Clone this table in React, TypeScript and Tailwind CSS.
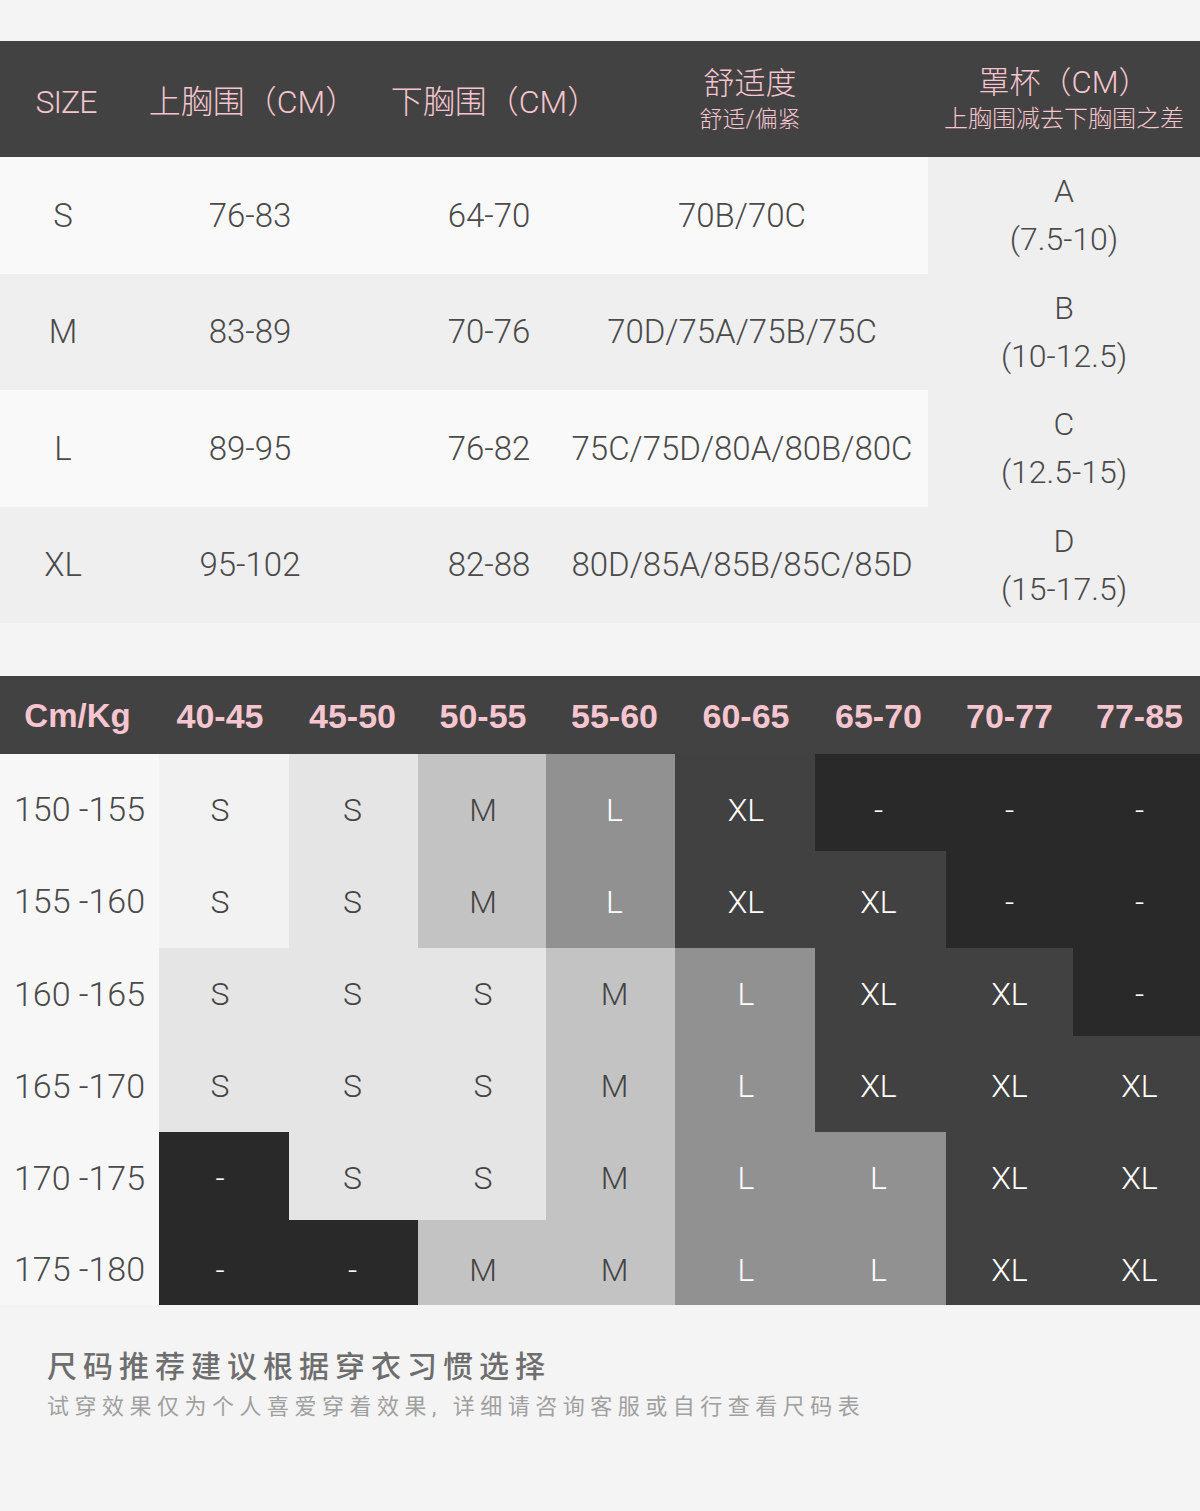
import React from "react";

const PINK = "text-[#f6c5cf]";

const sizeRows = [
  { s: "S", up: "76-83", low: "64-70", fit: "70B/70C", bg: "bg-[#f9f9f9]" },
  { s: "M", up: "83-89", low: "70-76", fit: "70D/75A/75B/75C", bg: "bg-[#efefef]" },
  { s: "L", up: "89-95", low: "76-82", fit: "75C/75D/80A/80B/80C", bg: "bg-[#f9f9f9]" },
  { s: "XL", up: "95-102", low: "82-88", fit: "80D/85A/85B/85C/85D", bg: "bg-[#efefef]" },
];

const cups = [
  ["A", "(7.5-10)"],
  ["B", "(10-12.5)"],
  ["C", "(12.5-15)"],
  ["D", "(15-17.5)"],
];

type Cell = { t: string; c: "a" | "b" | "c" | "d" | "e" | "f" };

const cellBg: Record<Cell["c"], string> = {
  a: "bg-[#f2f2f2] text-[#444444]",
  b: "bg-[#e5e5e5] text-[#444444]",
  c: "bg-[#c3c3c3] text-[#444444]",
  d: "bg-[#919191] text-white",
  e: "bg-[#414141] text-white",
  f: "bg-[#292929] text-white",
};

const colPad = [
  "pr-[8px]",
  "pr-[2px]",
  "pl-[2px]",
  "pl-[8px]",
  "pl-[2px]",
  "pr-[4px]",
  "",
  "pl-[6px]",
];

const grid: { label: string; h: string; cells: Cell[] }[] = [
  {
    label: "150 -155",
    h: "h-[97px] pt-[14px]",
    cells: [
      { t: "S", c: "a" },
      { t: "S", c: "b" },
      { t: "M", c: "c" },
      { t: "L", c: "d" },
      { t: "XL", c: "e" },
      { t: "-", c: "f" },
      { t: "-", c: "f" },
      { t: "-", c: "f" },
    ],
  },
  {
    label: "155 -160",
    h: "h-[97px] pt-[4px]",
    cells: [
      { t: "S", c: "a" },
      { t: "S", c: "b" },
      { t: "M", c: "c" },
      { t: "L", c: "d" },
      { t: "XL", c: "e" },
      { t: "XL", c: "e" },
      { t: "-", c: "f" },
      { t: "-", c: "f" },
    ],
  },
  {
    label: "160 -165",
    h: "h-[88px] pt-[4px]",
    cells: [
      { t: "S", c: "b" },
      { t: "S", c: "b" },
      { t: "S", c: "b" },
      { t: "M", c: "c" },
      { t: "L", c: "d" },
      { t: "XL", c: "e" },
      { t: "XL", c: "e" },
      { t: "-", c: "f" },
    ],
  },
  {
    label: "165 -170",
    h: "h-[96px] pt-[4px]",
    cells: [
      { t: "S", c: "b" },
      { t: "S", c: "b" },
      { t: "S", c: "b" },
      { t: "M", c: "c" },
      { t: "L", c: "d" },
      { t: "XL", c: "e" },
      { t: "XL", c: "e" },
      { t: "XL", c: "e" },
    ],
  },
  {
    label: "170 -175",
    h: "h-[88px] pt-[4px]",
    cells: [
      { t: "-", c: "f" },
      { t: "S", c: "b" },
      { t: "S", c: "b" },
      { t: "M", c: "c" },
      { t: "L", c: "d" },
      { t: "L", c: "d" },
      { t: "XL", c: "e" },
      { t: "XL", c: "e" },
    ],
  },
  {
    label: "175 -180",
    h: "h-[85px] pt-[14px]",
    cells: [
      { t: "-", c: "f" },
      { t: "-", c: "f" },
      { t: "M", c: "c" },
      { t: "M", c: "c" },
      { t: "L", c: "d" },
      { t: "L", c: "d" },
      { t: "XL", c: "e" },
      { t: "XL", c: "e" },
    ],
  },
];

const weights = ["40-45", "45-50", "50-55", "55-60", "60-65", "65-70", "70-77", "77-85"];

const LIGHT = { fontFamily: "Roboto, 'Noto Sans CJK SC', sans-serif" };
const CJK = { fontFamily: "Roboto, 'Noto Sans CJK SC', sans-serif" };
const BOLD = { fontFamily: "'Liberation Sans', Arial, sans-serif" };

export default function App() {
  return (
    <div className="w-[1200px] h-[1511px] bg-[#f4f4f4] flex flex-col overflow-hidden">
      <div className="h-[41px]" />

      {/* Table 1 header */}
      <div
        className={`h-[116px] bg-[#424242] grid grid-cols-[126px_248px_230px_324px_272px] items-center ${PINK}`}
        style={CJK}
      >
        <div className="flex justify-center pt-[6px] pl-[6px] text-[32px] font-light tracking-[-1px]">SIZE</div>
        <div className="flex justify-center pt-[6px] text-[32px] font-light whitespace-nowrap pl-[6px]">
          上胸围（CM）
        </div>
        <div className="flex justify-center pt-[6px] text-[32px] font-light whitespace-nowrap pl-[12px]">
          下胸围（CM）
        </div>
        <div className="flex flex-col items-center pr-[32px] leading-none">
          <div className="text-[31px] font-light">舒适度</div>
          <div className="text-[23px] font-light mt-[9px]">舒适/偏紧</div>
        </div>
        <div className="flex flex-col items-center leading-none">
          <div className="text-[31px] font-light whitespace-nowrap">罩杯（CM）</div>
          <div className="text-[24px] font-light mt-[9px] whitespace-nowrap">上胸围减去下胸围之差</div>
        </div>
      </div>

      {/* Table 1 body */}
      <div className="grid grid-cols-[928px_272px]">
        <div className="flex flex-col">
          {sizeRows.map((r) => (
            <div
              key={r.s}
              className={`h-[116.5px] ${r.bg} grid grid-cols-[126px_248px_230px_324px] items-center text-[33px] font-light text-[#4a4a4a]`}
              style={LIGHT}
            >
              <div className="flex justify-center">{r.s}</div>
              <div className="flex justify-center">{r.up}</div>
              <div className="flex justify-center">{r.low}</div>
              <div className="flex justify-center pr-[48px] whitespace-nowrap">{r.fit}</div>
            </div>
          ))}
        </div>
        <div className="flex flex-col bg-[#efefef]">
          {cups.map(([a, b]) => (
            <div
              key={a}
              className="h-[116.5px] flex flex-col items-center justify-center text-[32px] font-light text-[#4a4a4a] leading-[48px]"
              style={LIGHT}
            >
              <div>{a}</div>
              <div>{b}</div>
            </div>
          ))}
        </div>
      </div>

      <div className="h-[53px]" />

      {/* Table 2 */}
      <div className="grid grid-cols-[159px_130px_129px_128px_129px_140px_131px_127px_127px]">
        <div
          className={`h-[78px] bg-[#424242] flex items-center justify-center pr-[4px] pt-[2px] text-[33px] font-bold ${PINK}`}
          style={BOLD}
        >
          Cm/Kg
        </div>
        {weights.map((w, i) => (
          <div
            key={w}
            className={`h-[78px] bg-[#424242] flex items-center justify-center pt-[2px] text-[34px] font-bold ${PINK} ${colPad[i]}`}
            style={BOLD}
          >
            {w}
          </div>
        ))}
        {grid.map((row) => (
          <React.Fragment key={row.label}>
            <div
              className={`${row.h} bg-[#f7f7f7] flex items-center justify-center text-[34px] font-light text-[#4a4a4a] whitespace-nowrap`}
              style={LIGHT}
            >
              {row.label}
            </div>
            {row.cells.map((c, i) => (
              <div
                key={i}
                className={`${row.h} ${cellBg[c.c]} ${colPad[i]} flex items-center justify-center text-[32px] font-light`}
                style={LIGHT}
              >
                {c.t}
              </div>
            ))}
          </React.Fragment>
        ))}
      </div>

      {/* Footer */}
      <div className="pl-[47px] pt-[42px] flex flex-col" style={CJK}>
        <div className="text-[30px] leading-[40px] font-medium text-[#6e6e6e] tracking-[6px] whitespace-nowrap">
          尺码推荐建议根据穿衣习惯选择
        </div>
        <div className="text-[22px] leading-[30px] mt-[5px] text-[#a0a0a0] tracking-[5.5px] whitespace-nowrap">
          试穿效果仅为个人喜爱穿着效果, 详细请咨询客服或自行查看尺码表
        </div>
      </div>
    </div>
  );
}
